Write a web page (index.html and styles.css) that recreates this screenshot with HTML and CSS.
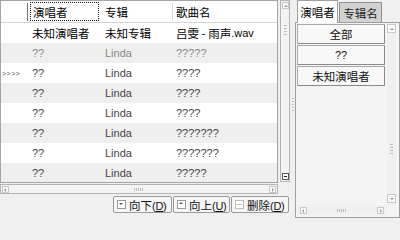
FILE: index.html
```html
<!DOCTYPE html>
<html>
<head>
<meta charset="utf-8">
<link rel="stylesheet" href="styles.css">
</head>
<body>
<div class="app">
  <div class="left">
    <div class="top">
      <div class="table">
        <div class="thead">
          <div class="c c0 hc0"></div>
          <div class="c c1 zh"><span class="focus">演唱者</span></div>
          <div class="c c2 zh hc2">专辑</div>
          <div class="c c3 zh">歌曲名</div>
        </div>
        <div class="tbody">
          <div class="row first"><div class="c c0"></div><div class="c c1 zh">未知演唱者</div><div class="c c2 zh">未知专辑</div><div class="c c3"><span class="zh">吕雯 - 雨声</span>.wav</div></div>
          <div class="row alt light"><div class="c c0"></div><div class="c c1">??</div><div class="c c2">Linda</div><div class="c c3">?????</div></div>
          <div class="row"><div class="c c0 mark">&gt;&gt;&gt;&gt;</div><div class="c c1">??</div><div class="c c2">Linda</div><div class="c c3">????</div></div>
          <div class="row alt"><div class="c c0"></div><div class="c c1">??</div><div class="c c2">Linda</div><div class="c c3">????</div></div>
          <div class="row"><div class="c c0"></div><div class="c c1">??</div><div class="c c2">Linda</div><div class="c c3">????</div></div>
          <div class="row alt"><div class="c c0"></div><div class="c c1">??</div><div class="c c2">Linda</div><div class="c c3">???????</div></div>
          <div class="row"><div class="c c0"></div><div class="c c1">??</div><div class="c c2">Linda</div><div class="c c3">???????</div></div>
          <div class="row alt"><div class="c c0"></div><div class="c c1">??</div><div class="c c2">Linda</div><div class="c c3">?????</div></div>
        </div>
      </div>
      <div class="vscroll">
        <span class="arrow up"></span>
        <span class="vgrip"></span>
        <span class="arrow down dark"></span>
      </div>
    </div>
    <div class="hscroll">
      <span class="arrow lt"></span>
      <span class="hgrip"></span>
      <span class="arrow rt"></span>
    </div>
    <div class="btns">
      <div class="btn b1"><span class="ico"><span class="tri-d"></span></span><span class="lbl"><span class="zh">向下</span>(<u>D</u>)</span></div>
      <div class="btn b2"><span class="ico"><span class="tri-u"></span></span><span class="lbl"><span class="zh">向上</span>(<u>U</u>)</span></div>
      <div class="btn b3"><span class="ico minus"><span class="bar"></span></span><span class="lbl"><span class="zh">删除</span>(<u>D</u>)</span></div>
    </div>
  </div>
  <div class="splitter"><span class="sgrip"></span></div>
  <div class="right">
    <div class="tabs">
      <div class="tab sel zh">演唱者</div>
      <div class="tab zh">专辑名</div>
    </div>
    <div class="list">
      <div class="lmain">
        <div class="items">
          <div class="item zh">全部</div>
          <div class="item">??</div>
          <div class="item zh">未知演唱者</div>
        </div>
        <div class="lvs">
          <span class="arrow up"></span>
          <span class="vgrip lg"></span>
          <span class="arrow down"></span>
        </div>
      </div>
      <div class="lhs">
        <span class="arrow lt"></span>
        <span class="hgrip"></span>
        <span class="arrow rt"></span>
      </div>
    </div>
  </div>
</div>
</body>
</html>
```

FILE: styles.css
```css
html, body {
  margin: 0;
  padding: 0;
}
body {
  width: 400px;
  height: 218px;
  overflow: hidden;
  background: #f0f0f0;
  font-family: "Liberation Sans", "Noto Sans CJK SC", sans-serif;
  font-size: 11px;
  color: #444;
}
.zh {
  font-family: "Noto Sans CJK SC", sans-serif;
  font-size: 11.5px;
}
.app {
  display: flex;
  height: 218px;
}
.left {
  width: 291px;
  display: flex;
  flex-direction: column;
}
.top {
  display: flex;
  gap: 2px;
  height: 183px;
}
.table {
  width: 276px;
  height: 181px;
  border: 1px solid #a4a4a4;
  background: #fff;
  display: flex;
  flex-direction: column;
  overflow: hidden;
}
.thead {
  display: flex;
  height: 21px;
  border-bottom: 1px solid #d4d4d4;
  color: #000;
  align-items: stretch;
}
.c {
  display: flex;
  align-items: center;
  white-space: nowrap;
  overflow: hidden;
  box-sizing: border-box;
}
.c0 { width: 27px; }
.c1 { width: 71px; padding-left: 4px; }
.c2 { width: 74px; padding-left: 6px; }
.c3 { flex: 1; padding-left: 3px; }
.hc0 {
  position: relative;
}
.hc0::after {
  content: "";
  position: absolute;
  right: 0;
  top: 2px;
  bottom: 1px;
  width: 1px;
  background: #777;
}
.thead .c1 {
  padding-left: 2px;
}
.focus {
  display: flex;
  align-items: center;
  width: 70px;
  height: 19px;
  box-sizing: border-box;
  padding-left: 2px;
  border: 1px dotted #222;
}
.hc2 {
  border-right: 1px solid #d8d8d8;
  margin: 2px 0;
}
.tbody {
  flex: 1;
  overflow: hidden;
}
.row {
  display: flex;
  height: 20px;
}
.row.alt {
  background: #efefef;
}
.row.first {
  color: #000;
}
.row.light {
  color: #888;
}
.mark {
  font-size: 7px;
  color: #555;
  padding-left: 1px;
  letter-spacing: 0.5px;
}
.vscroll {
  width: 8px;
  height: 180px;
  border: 1px solid #b4b4b4;
  background: #f4f4f4;
  display: flex;
  flex-direction: column;
  align-items: center;
  justify-content: space-between;
}
.arrow {
  display: block;
  width: 7px;
  height: 7px;
  box-sizing: border-box;
  border: 1px solid #c8c8c8;
  background: #fafafa;
  position: relative;
}
.arrow::after {
  content: "";
  position: absolute;
  left: 1px;
  top: 1px;
  border: 2px solid transparent;
}
.arrow.up::after {
  top: 0;
  border-bottom-color: #999;
}
.arrow.down::after {
  top: 2px;
  border-top-color: #999;
}
.arrow.down.dark {
  border-color: #555;
  background: #fff;
}
.arrow.down.dark::after {
  border: none;
  left: 1px;
  top: 2px;
  width: 3px;
  height: 1px;
  background: #222;
}
.arrow.lt::after {
  left: -1px;
  border-right-color: #999;
}
.arrow.rt::after {
  left: 2px;
  border-left-color: #999;
}
.vscroll .arrow.up {
  margin-top: 1px;
}
.vscroll .arrow.down {
  margin-bottom: 1px;
}
.vgrip {
  width: 3px;
  height: 12px;
  margin-bottom: 120px;
  background: repeating-linear-gradient(#bbb 0 1px, transparent 1px 3px);
}
.lg {
  margin-bottom: 0;
  margin-top: 70px;
  height: 10px;
}
.hscroll {
  width: 274px;
  height: 8px;
  margin-top: 1px;
  border: 1px solid #b4b4b4;
  background: #f4f4f4;
  display: flex;
  align-items: center;
  justify-content: space-between;
  padding: 0 1px;
}
.hgrip {
  width: 10px;
  height: 3px;
  background: repeating-linear-gradient(90deg, #bbb 0 1px, transparent 1px 2px);
}
.btns {
  display: flex;
  gap: 1px;
  margin-top: 2px;
  padding-left: 113px;
}
.btn {
  height: 17px;
  box-sizing: border-box;
  border: 1px solid #9a9a9a;
  border-radius: 2px;
  background: #f6f6f6;
  display: flex;
  align-items: center;
  gap: 2px;
  padding-left: 3px;
  color: #111;
  font-size: 11px;
  white-space: nowrap;
}
.lbl {
  white-space: nowrap;
  letter-spacing: -0.3px;
}
.btn .zh {
  font-size: 11.5px;
  letter-spacing: 0;
}
.btn u {
  text-decoration: underline;
}
.b1 { width: 59px; }
.b2 { width: 57px; }
.b3 { width: 58px; }
.ico {
  width: 7px;
  height: 7px;
  border: 1px solid #999;
  background: #fff;
  position: relative;
  flex: none;
  margin-right: 1px;
}
.tri-d, .tri-u {
  position: absolute;
  left: 1px;
  border: 2.5px solid transparent;
}
.tri-d {
  top: 2px;
  border-top-color: #555;
}
.tri-u {
  top: -1px;
  border-bottom-color: #555;
}
.minus {
  border-color: #bbb;
}
.minus .bar {
  position: absolute;
  left: 1px;
  top: 3px;
  width: 5px;
  height: 1px;
  background: #bbb;
}
.splitter {
  width: 4px;
  display: flex;
  justify-content: center;
}
.sgrip {
  margin-top: 98px;
  width: 2px;
  height: 14px;
  background: repeating-linear-gradient(#bbb 0 1px, transparent 1px 3px);
}
.right {
  width: 105px;
  display: flex;
  flex-direction: column;
}
.tabs {
  display: flex;
  height: 22px;
  padding-left: 2px;
  align-items: flex-end;
  color: #000;
}
.tab {
  box-sizing: border-box;
  display: flex;
  align-items: center;
  justify-content: center;
}
.tab.sel {
  width: 41px;
  height: 23px;
  margin-bottom: -1px;
  background: #fff;
  border: 1px solid #a0a0a0;
  border-bottom: none;
  position: relative;
  z-index: 1;
}
.tab:not(.sel) {
  width: 43px;
  height: 20px;
  margin-left: 1px;
  background: #d2d2d2;
  border: 1px solid #909090;
  border-bottom: none;
  color: #222;
}
.list {
  flex: 1;
  border: 1px solid #a0a0a0;
  background: #f4f4f4;
  display: flex;
  flex-direction: column;
}
.lmain {
  flex: 1;
  display: flex;
}
.items {
  width: 88px;
  padding: 1px 0 0 1px;
  display: flex;
  flex-direction: column;
  gap: 1px;
}
.item {
  height: 20px;
  box-sizing: border-box;
  border: 1px solid #a8a8a8;
  border-right-color: #8a8a8a;
  border-bottom-color: #8a8a8a;
  border-radius: 1px;
  background: #f8f8f8;
  display: flex;
  align-items: center;
  justify-content: center;
  color: #111;
}
.lvs {
  width: 9px;
  margin-left: 2px;
  display: flex;
  flex-direction: column;
  align-items: center;
  justify-content: space-between;
  background: #f0f0f0;
  padding: 1px 0 2px;
}
.lvs .arrow {
  width: 9px;
  height: 9px;
}
.lvs .arrow::after {
  left: 2px;
  top: 1px;
}
.lvs .arrow.down::after {
  top: 3px;
}
.lhs {
  height: 10px;
  margin: 0 12px 2px 1px;
  display: flex;
  align-items: center;
  justify-content: space-between;
  padding: 0 3px;
  background: #f0f0f0;
}
```
